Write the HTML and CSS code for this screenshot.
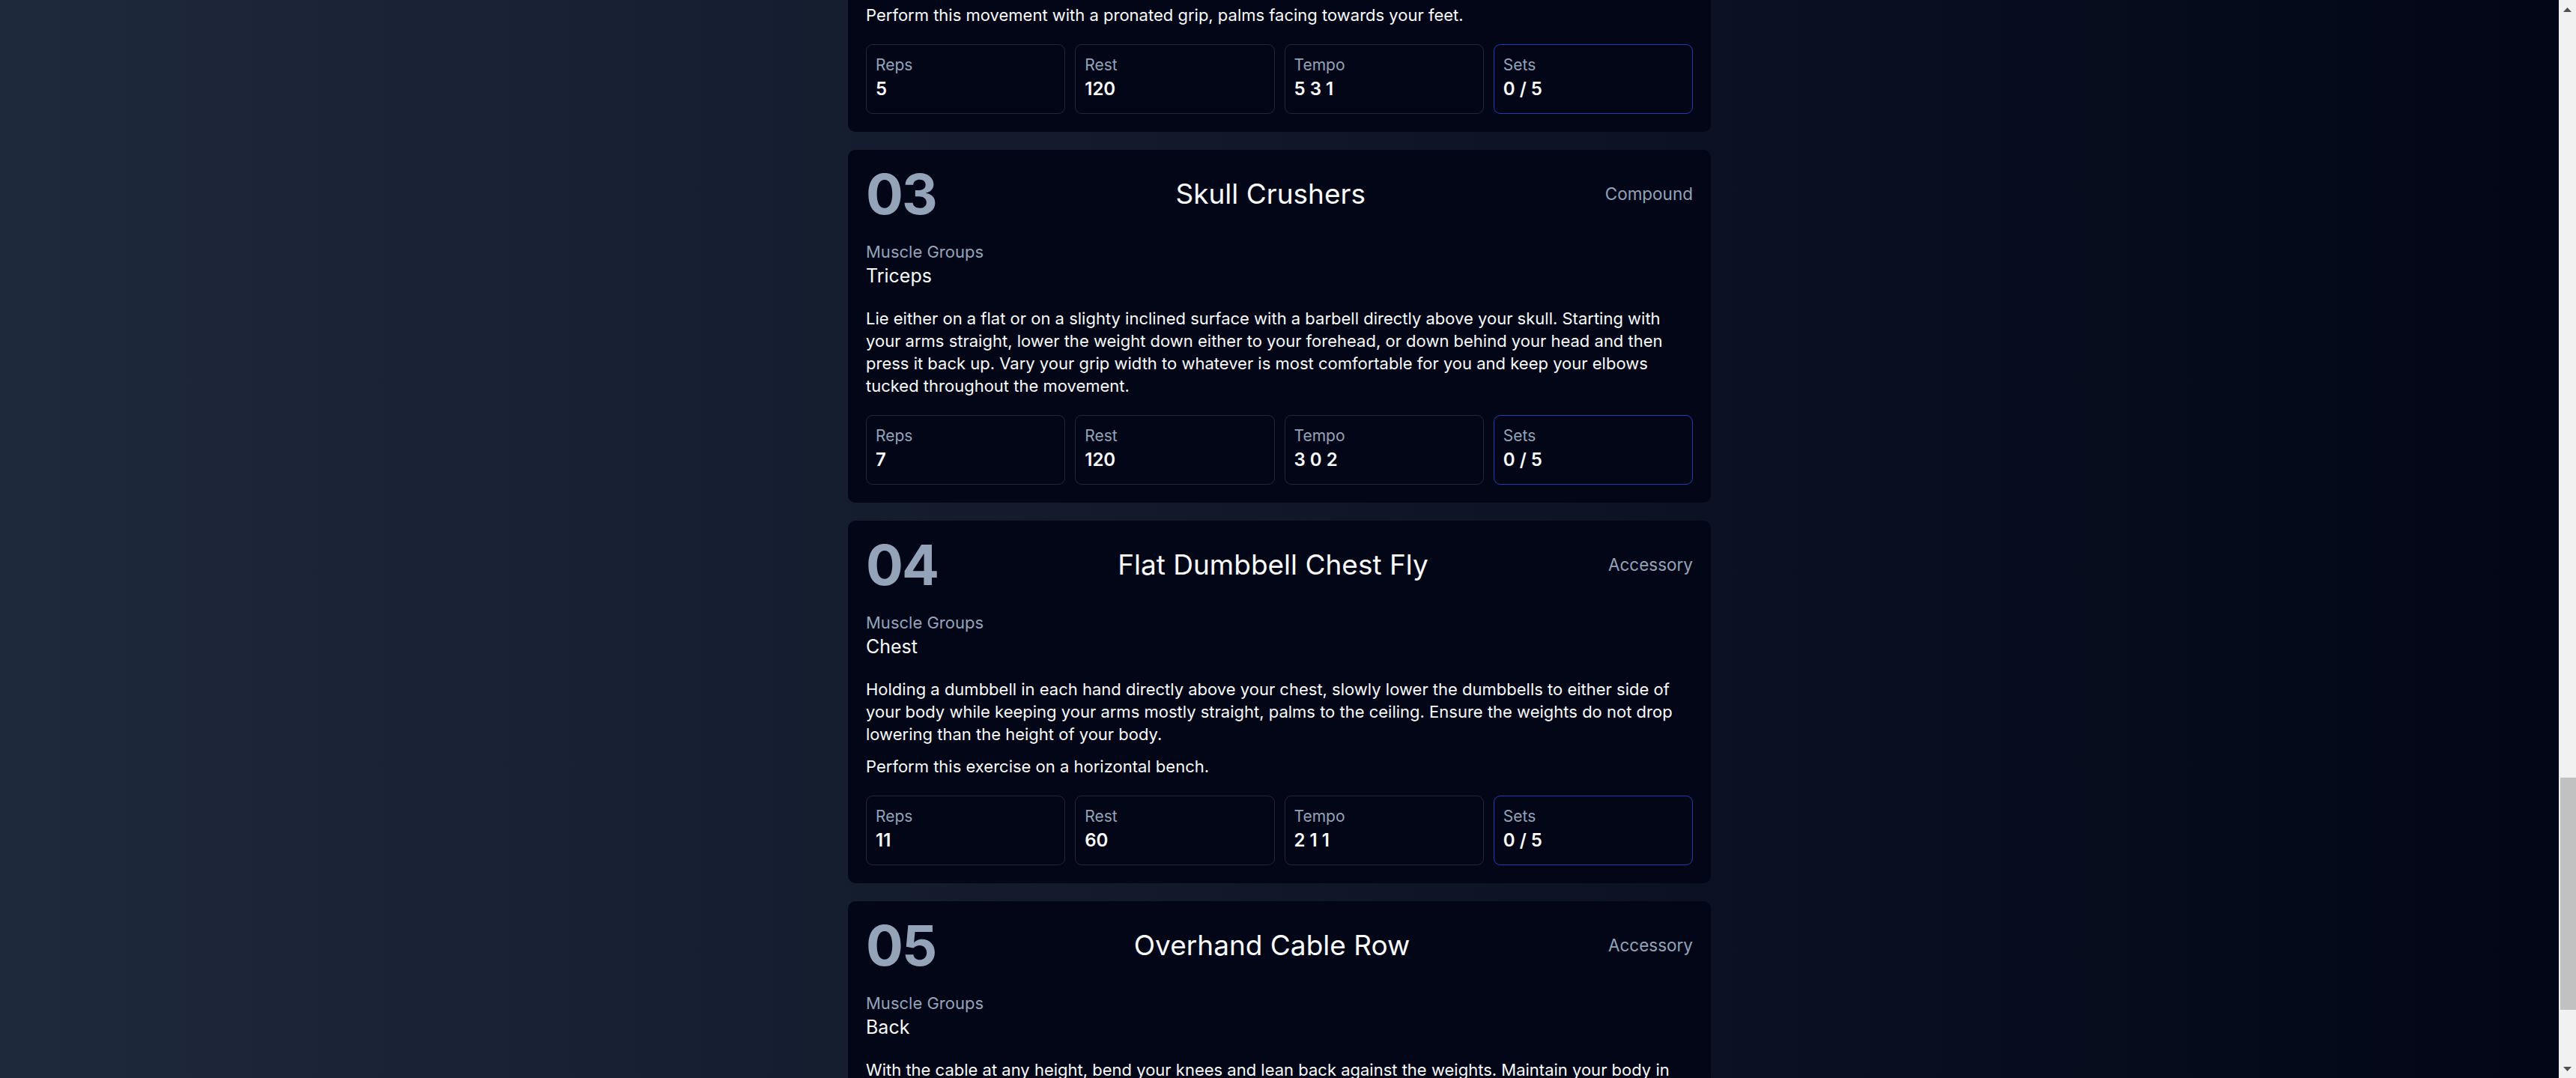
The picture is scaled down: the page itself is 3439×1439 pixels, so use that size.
FILE: index.html
```html
<!DOCTYPE html>
<html lang="en">
<head>
<meta charset="utf-8">
<title>Workout</title>
<link rel="stylesheet" href="styles.css">
</head>
<body class="page">
  <main class="viewport">
    <div class="list">
      <section class="card card--cut">
        <p class="desc">Perform this movement with a pronated grip, palms facing towards your feet.</p>
        <div class="stats">
          <div class="stat"><div class="stat-label">Reps</div><div class="stat-value">5</div></div>
          <div class="stat"><div class="stat-label">Rest</div><div class="stat-value">120</div></div>
          <div class="stat"><div class="stat-label">Tempo</div><div class="stat-value">5 3 1</div></div>
          <div class="stat stat--sets"><div class="stat-label">Sets</div><div class="stat-value">0 / 5</div></div>
        </div>
      </section>

      <section class="card">
        <header class="card-head">
          <span class="num">03</span>
          <h2 class="title">Skull Crushers</h2>
          <span class="cat">Compound</span>
        </header>
        <div class="muscle-label">Muscle Groups</div>
        <div class="muscle">Triceps</div>
        <p class="desc">Lie either on a flat or on a slighty inclined surface with a barbell directly above your skull. Starting with<br>your arms straight, lower the weight down either to your forehead, or down behind your head and then<br>press it back up. Vary your grip width to whatever is most comfortable for you and keep your elbows<br>tucked throughout the movement.</p>
        <div class="stats">
          <div class="stat"><div class="stat-label">Reps</div><div class="stat-value">7</div></div>
          <div class="stat"><div class="stat-label">Rest</div><div class="stat-value">120</div></div>
          <div class="stat"><div class="stat-label">Tempo</div><div class="stat-value">3 0 2</div></div>
          <div class="stat stat--sets"><div class="stat-label">Sets</div><div class="stat-value">0 / 5</div></div>
        </div>
      </section>

      <section class="card">
        <header class="card-head">
          <span class="num">04</span>
          <h2 class="title">Flat Dumbbell Chest Fly</h2>
          <span class="cat">Accessory</span>
        </header>
        <div class="muscle-label">Muscle Groups</div>
        <div class="muscle">Chest</div>
        <p class="desc">Holding a dumbbell in each hand directly above your chest, slowly lower the dumbbells to either side of<br>your body while keeping your arms mostly straight, palms to the ceiling. Ensure the weights do not drop<br>lowering than the height of your body.</p>
        <p class="desc desc--next">Perform this exercise on a horizontal bench.</p>
        <div class="stats">
          <div class="stat"><div class="stat-label">Reps</div><div class="stat-value">11</div></div>
          <div class="stat"><div class="stat-label">Rest</div><div class="stat-value">60</div></div>
          <div class="stat"><div class="stat-label">Tempo</div><div class="stat-value">2 1 1</div></div>
          <div class="stat stat--sets"><div class="stat-label">Sets</div><div class="stat-value">0 / 5</div></div>
        </div>
      </section>

      <section class="card">
        <header class="card-head">
          <span class="num">05</span>
          <h2 class="title">Overhand Cable Row</h2>
          <span class="cat">Accessory</span>
        </header>
        <div class="muscle-label">Muscle Groups</div>
        <div class="muscle">Back</div>
        <p class="desc">With the cable at any height, bend your knees and lean back against the weights. Maintain your body in<br>an upright position and pull the handle towards your upper abdomen.</p>
      </section>
    </div>
  </main>

  <div class="scrollbar" aria-hidden="true">
    <div class="sb-btn">
      <svg width="11" height="6" viewBox="0 0 11 6"><polygon points="0,6 5.5,0 11,6" fill="#505050"/></svg>
    </div>
    <div class="sb-track"><div class="sb-thumb"></div></div>
    <div class="sb-btn">
      <svg width="11" height="6" viewBox="0 0 11 6"><polygon points="0,0 11,0 5.5,6" fill="#505050"/></svg>
    </div>
  </div>
</body>
</html>
```
FILE: styles.css
```css
html, body {
  margin: 0;
  padding: 0;
  height: 100%;
}

.page {
  display: flex;
  height: 100vh;
  overflow: hidden;
  font-family: "Inter", "Liberation Sans", sans-serif;
  color: #f8fafc;
}

.viewport {
  flex: 1;
  min-width: 0;
  overflow: hidden;
  background: linear-gradient(to right, #1e293b, #020617);
}

.list {
  max-width: 1152px;
  margin: 0 auto;
  display: flex;
  flex-direction: column;
  gap: 24px;
}

.card {
  background: #020617;
  border-radius: 10px;
  padding: 24px 24px 24px;
}

.card--cut {
  padding-top: 5px;
  border-radius: 0 0 10px 10px;
}

.card-head {
  display: flex;
  justify-content: space-between;
  align-items: center;
  height: 70px;
}

.num {
  font-size: 74px;
  line-height: 70px;
  font-weight: 700;
  letter-spacing: -2px;
  color: #94a3b8;
}

.title {
  margin: 0;
  font-size: 37px;
  line-height: 44px;
  font-weight: 400;
  color: #f8fafc;
}

.cat {
  font-size: 22.5px;
  line-height: 30px;
  color: #94a3b8;
}

.muscle-label {
  margin-top: 27px;
  font-size: 22px;
  line-height: 30px;
  color: #94a3b8;
}

.muscle {
  font-size: 25px;
  line-height: 34px;
  color: #f8fafc;
}

.desc {
  margin: 25px 0 0;
  font-size: 22px;
  line-height: 30px;
  color: #f8fafc;
}

.card--cut .desc {
  margin-top: 0;
}

.desc--next {
  margin-top: 13px;
}

.stats {
  margin-top: 24px;
  display: grid;
  grid-template-columns: repeat(4, 1fr);
  gap: 13px;
}

.stat {
  border: 1px solid #1e293b;
  border-radius: 9px;
  padding: 12px 12px 15px;
}

.stat--sets {
  border-color: #1e40af;
}

.stat-label {
  font-size: 21px;
  line-height: 30px;
  color: #94a3b8;
}

.stat-value {
  font-size: 24px;
  line-height: 34px;
  font-weight: 600;
  color: #f8fafc;
}

.scrollbar {
  width: 23px;
  flex: none;
  background: #f1f1f1;
  display: flex;
  flex-direction: column;
}

.sb-btn {
  height: 25px;
  flex: none;
  display: flex;
  align-items: center;
  justify-content: center;
}

.sb-track {
  flex: 1;
  display: flex;
  flex-direction: column;
}

.sb-thumb {
  margin: 1013px 0 0 2px;
  height: 310px;
  background: #c1c1c1;
}
```
